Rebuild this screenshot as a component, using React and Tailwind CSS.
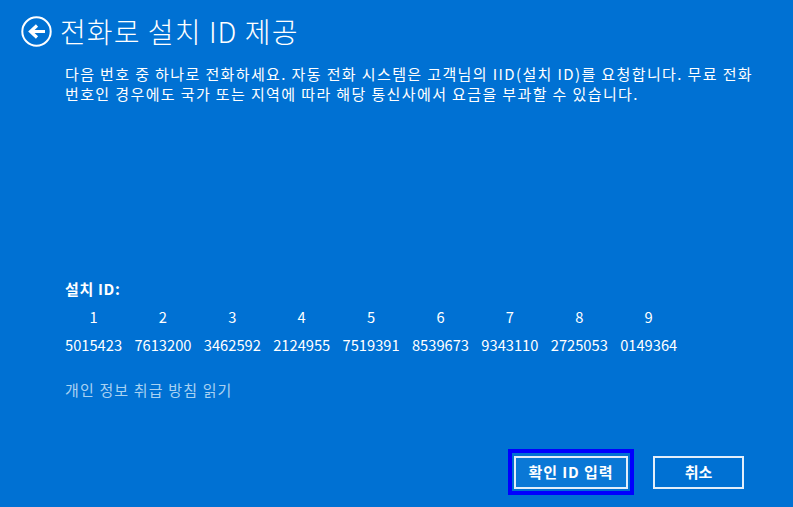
const ids = ["5015423", "7613200", "3462592", "2124955", "7519391", "8539673", "9343110", "2725053", "0149364"];

export default function App() {
  return (
    <div className="h-[507px] w-[793px] overflow-hidden bg-[#0071d3] text-white flex flex-col font-['Noto_Sans_CJK_KR','Noto_Sans',sans-serif]">
      <div className="flex items-center pl-[21px] pt-[15px] h-[47px]">
        <svg width="31" height="31" viewBox="0 0 31 31" fill="none" stroke="white">
          <circle cx="15.5" cy="15.5" r="14.2" strokeWidth="2" />
          <path d="M24 15.5H10M16 9.5L9.5 15.5L16 21.5" strokeWidth="3.2" />
        </svg>
        <h1 className="ml-[8px] text-[28px] leading-[30px] font-light tracking-[1.1px]">전화로 설치 ID 제공</h1>
      </div>

      <div className="pl-[65px] pt-[17px] text-[15px] leading-[20px] tracking-[1.38px] h-[216px] whitespace-nowrap">
        <p>다음 번호 중 하나로 전화하세요. 자동 전화 시스템은 고객님의 IID(설치 ID)를 요청합니다. 무료 전화</p>
        <p>번호인 경우에도 국가 또는 지역에 따라 해당 통신사에서 요금을 부과할 수 있습니다.</p>
      </div>

      <div className="pl-[65px] mt-[16px] flex flex-col">
        <div className="text-[15px] leading-[20px] font-bold tracking-[0.65px]">설치 ID:</div>
        <div className="mt-[8px] flex text-[14.7px] leading-[20px]">
          {ids.map((id, i) => (
            <div key={id} className="w-[69.4px] shrink-0 flex flex-col">
              <span className="w-[57px] text-center">{i + 1}</span>
              <span className="mt-[8px]">{id}</span>
            </div>
          ))}
        </div>
        <a className="mt-[25px] text-[15px] leading-[20px] tracking-[1.15px] text-[#a9d2f2]">개인 정보 취급 방침 읽기</a>
      </div>

      <div className="mt-[49px] flex justify-end items-center pr-[49px] gap-[19px]">
        <div className="border-[4px] border-[#0000ff] px-[2px] py-[2.5px]">
          <button className="block w-[114px] h-[33px] border-[2px] border-[#e3eefa] bg-[#0a78d6] text-[15px] font-semibold tracking-[0.9px]">확인 ID 입력</button>
        </div>
        <button className="w-[91px] h-[33px] border-[2px] border-[#e3eefa] text-[15px] font-semibold">취소</button>
      </div>
    </div>
  );
}
